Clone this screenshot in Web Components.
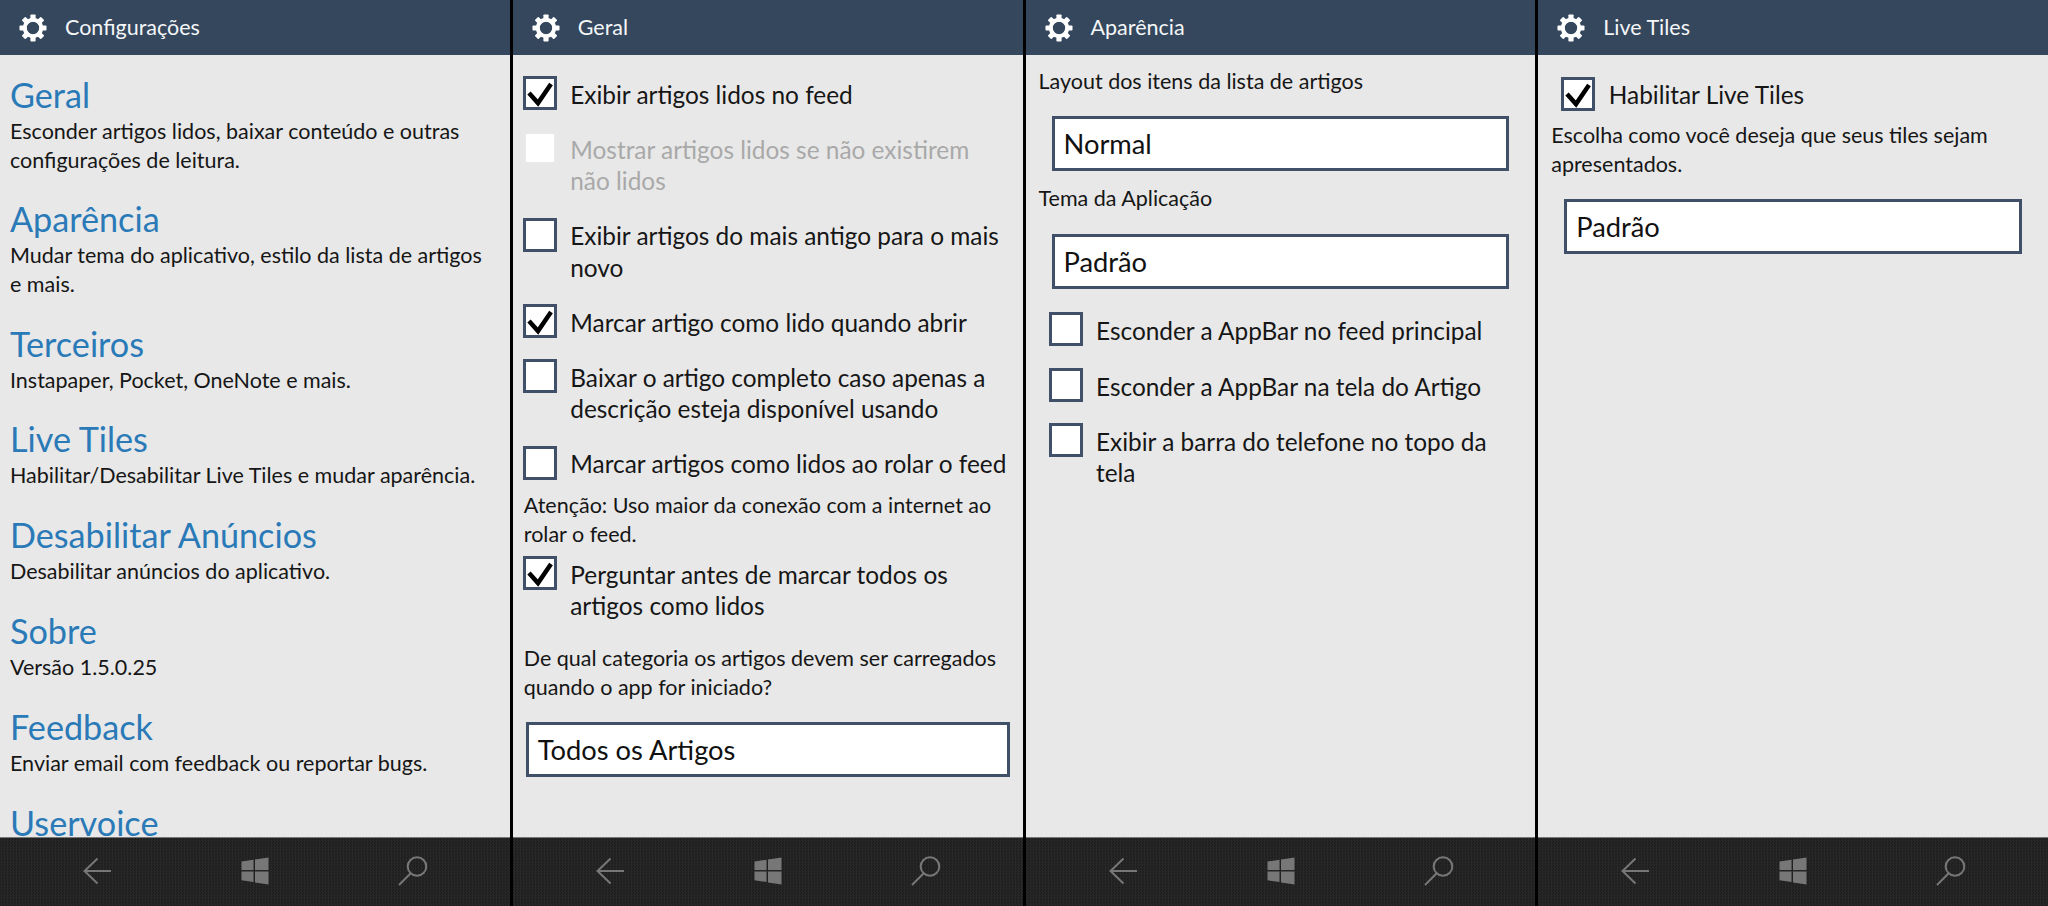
<!DOCTYPE html>
<html lang="pt"><head><meta charset="utf-8"><title>Configurações</title>
<style>
html,body{margin:0;height:100%;overflow:hidden;background:#000;font-family:"Lato","Open Sans",sans-serif;color:#161616}
</style></head><body>
<screen-strip>
<phone-panel heading="Configurações">
  <link-item heading="Geral" style="margin-top:18px">Esconder artigos lidos, baixar conteúdo e outras<br>configurações de leitura.</link-item>
  <link-item heading="Aparência">Mudar tema do aplicativo, estilo da lista de artigos<br>e mais.</link-item>
  <link-item heading="Terceiros">Instapaper, Pocket, OneNote e mais.</link-item>
  <link-item heading="Live Tiles">Habilitar/Desabilitar Live Tiles e mudar aparência.</link-item>
  <link-item heading="Desabilitar Anúncios">Desabilitar anúncios do aplicativo.</link-item>
  <link-item heading="Sobre">Versão 1.5.0.25</link-item>
  <link-item heading="Feedback">Enviar email com feedback ou reportar bugs.</link-item>
  <link-item heading="Uservoice"></link-item>
</phone-panel>
<phone-panel heading="Geral">
  <check-row checked style="margin:21px 0 0 10px">Exibir artigos lidos no feed</check-row>
  <check-row disabled style="margin:21px 0 0 10px">Mostrar artigos lidos se não existirem<br>não lidos</check-row>
  <check-row style="margin:21px 0 0 10px">Exibir artigos do mais antigo para o mais<br>novo</check-row>
  <check-row checked style="margin:21px 0 0 10px">Marcar artigo como lido quando abrir</check-row>
  <check-row style="margin:21px 0 0 10px">Baixar o artigo completo caso apenas a<br>descrição esteja disponível usando</check-row>
  <check-row style="margin:21px 0 0 10px">Marcar artigos como lidos ao rolar o feed</check-row>
  <note-text style="margin:11.5px 0 0 11px">Atenção: Uso maior da conexão com a internet ao<br>rolar o feed.</note-text>
  <check-row checked style="margin:8px 0 0 10px">Perguntar antes de marcar todos os<br>artigos como lidos</check-row>
  <note-text style="margin:22.5px 0 0 11px">De qual categoria os artigos devem ser carregados<br>quando o app for iniciado?</note-text>
  <combo-box style="margin:21px 13px 0">Todos os Artigos</combo-box>
</phone-panel>
<phone-panel heading="Aparência">
  <note-text style="margin:12px 0 0 13px">Layout dos itens da lista de artigos</note-text>
  <combo-box style="margin:20px 26px 0">Normal</combo-box>
  <note-text style="margin:13px 0 0 13px">Tema da Aplicação</note-text>
  <combo-box style="margin:22px 26px 0">Padrão</combo-box>
  <check-row style="margin:23px 0 0 23px">Esconder a AppBar no feed principal</check-row>
  <check-row style="margin:22px 0 0 23px">Esconder a AppBar na tela do Artigo</check-row>
  <check-row style="margin:21px 0 0 23px">Exibir a barra do telefone no topo da<br>tela</check-row>
</phone-panel>
<phone-panel heading="Live Tiles">
  <check-row checked style="margin:21.5px 0 0 23px">Habilitar Live Tiles</check-row>
  <note-text style="margin:10.5px 0 0 13px">Escolha como você deseja que seus tiles sejam<br>apresentados.</note-text>
  <combo-box style="margin:21px 26px 0">Padrão</combo-box>
</phone-panel>
</screen-strip>
<script>
const FONT='"Lato","Open Sans",sans-serif';
function def(name,html,init){
  const t=document.createElement('template');t.innerHTML=html;
  customElements.define(name,class extends HTMLElement{
    constructor(){super();this.attachShadow({mode:'open'}).appendChild(t.content.cloneNode(true));}
    connectedCallback(){if(init)init(this,this.shadowRoot);}
  });
}
const teeth=[0,45,90,135,180,225,270,315].map(a=>`<rect x="11.4" y="0.5" width="5.2" height="7" rx=".8" transform="rotate(${a} 14 14)"/>`).join('');
def('screen-strip',`<style>:host{display:grid;grid-template-columns:repeat(4,1fr);gap:3px;height:906px;background:#000}</style><slot></slot>`);
def('phone-panel',`<style>
:host{display:flex;flex-direction:column;min-width:0;height:906px;background:#e8e8e8}
header{flex:none;height:55px;background:#34475d;display:flex;align-items:center;padding-left:19px;color:#f4f6f8;font:400 21.5px/55px ${FONT}}
svg.gear{width:28px;height:28px;flex:none;margin-right:18px;fill:#fff}
main{flex:1;min-height:0;overflow:hidden;display:flex;flex-direction:column}
nav{flex:none;height:69px;box-sizing:border-box;border-top:1px solid #767676;display:grid;grid-template-columns:repeat(3,158px);padding-left:18px;align-items:center;justify-items:center;
background:repeating-conic-gradient(#282828 0 25%,#1e1e1e 0 50%) 0 0/3px 3px}
nav svg{display:block;margin-top:-2px}
</style>
<header><svg class="gear" viewBox="0 0 28 28">${teeth}<circle cx="14" cy="14" r="8.2" fill="none" stroke="#fff" stroke-width="4"/></svg><span id="t"></span></header>
<main><slot></slot></main>
<nav>
<svg width="28" height="28" viewBox="0 0 28 28" fill="none" stroke="#777" stroke-width="2"><path d="M28 14H2M14.500 1.500L1.500 14l13 12.500"/></svg>
<svg width="28" height="28" viewBox="0 0 28 28" fill="#777"><path d="M0.500 4.500L12.500 2.700V13H0.500zM14 2.500L27.500 0.500V13H14zM0.500 14.500H12.500V25L0.500 23.300zM14 14.500H27.500V27.500L14 25.500z"/></svg>
<svg width="30" height="30" viewBox="0 0 30 30" fill="none" stroke="#777" stroke-width="2"><circle cx="19" cy="10.500" r="9.300"/><path d="M12.500 17.500L1 29"/></svg>
</nav>`,(el,s)=>{s.getElementById('t').textContent=el.getAttribute('heading');});
def('link-item',`<style>
:host{display:block;flex:none;margin:0 10px 23.3px;font-size:21.5px;line-height:28.5px}
h2{margin:0;font:400 34.2px/44px ${FONT};color:#2a7ab8}
</style><h2 id="h"></h2><slot></slot>`,(el,s)=>{s.getElementById('h').textContent=el.getAttribute('heading');});
def('note-text',`<style>:host{display:block;flex:none;font-size:21.5px;line-height:28.5px}</style><slot></slot>`);
def('check-row',`<style>
:host{display:flex;flex:none;gap:13.5px;font-size:24.4px;line-height:31.5px;color:#161616}
:host([disabled]){color:#a9a9a9}
.box{flex:none;box-sizing:border-box;width:34px;height:34px;border:3px solid #3f5068;background:#fff;display:block}
:host([disabled]) .box{border-color:#e9e9e9}
.txt{padding-top:2.5px}
polyline{display:none}
:host([checked]) polyline{display:block}
</style><svg class="box" viewBox="0 0 28 28"><polyline points="3,14 12,24 25,5" fill="none" stroke="#000" stroke-width="4.500"/></svg><div class="txt"><slot></slot></div>`);
def('combo-box',`<style>
:host{display:block;flex:none;box-sizing:border-box;height:55px;border:3px solid #3f5068;background:#fff;padding-left:9px;font-size:27.3px;line-height:50px;color:#111}
</style><slot></slot>`);
</script>
</body></html>
